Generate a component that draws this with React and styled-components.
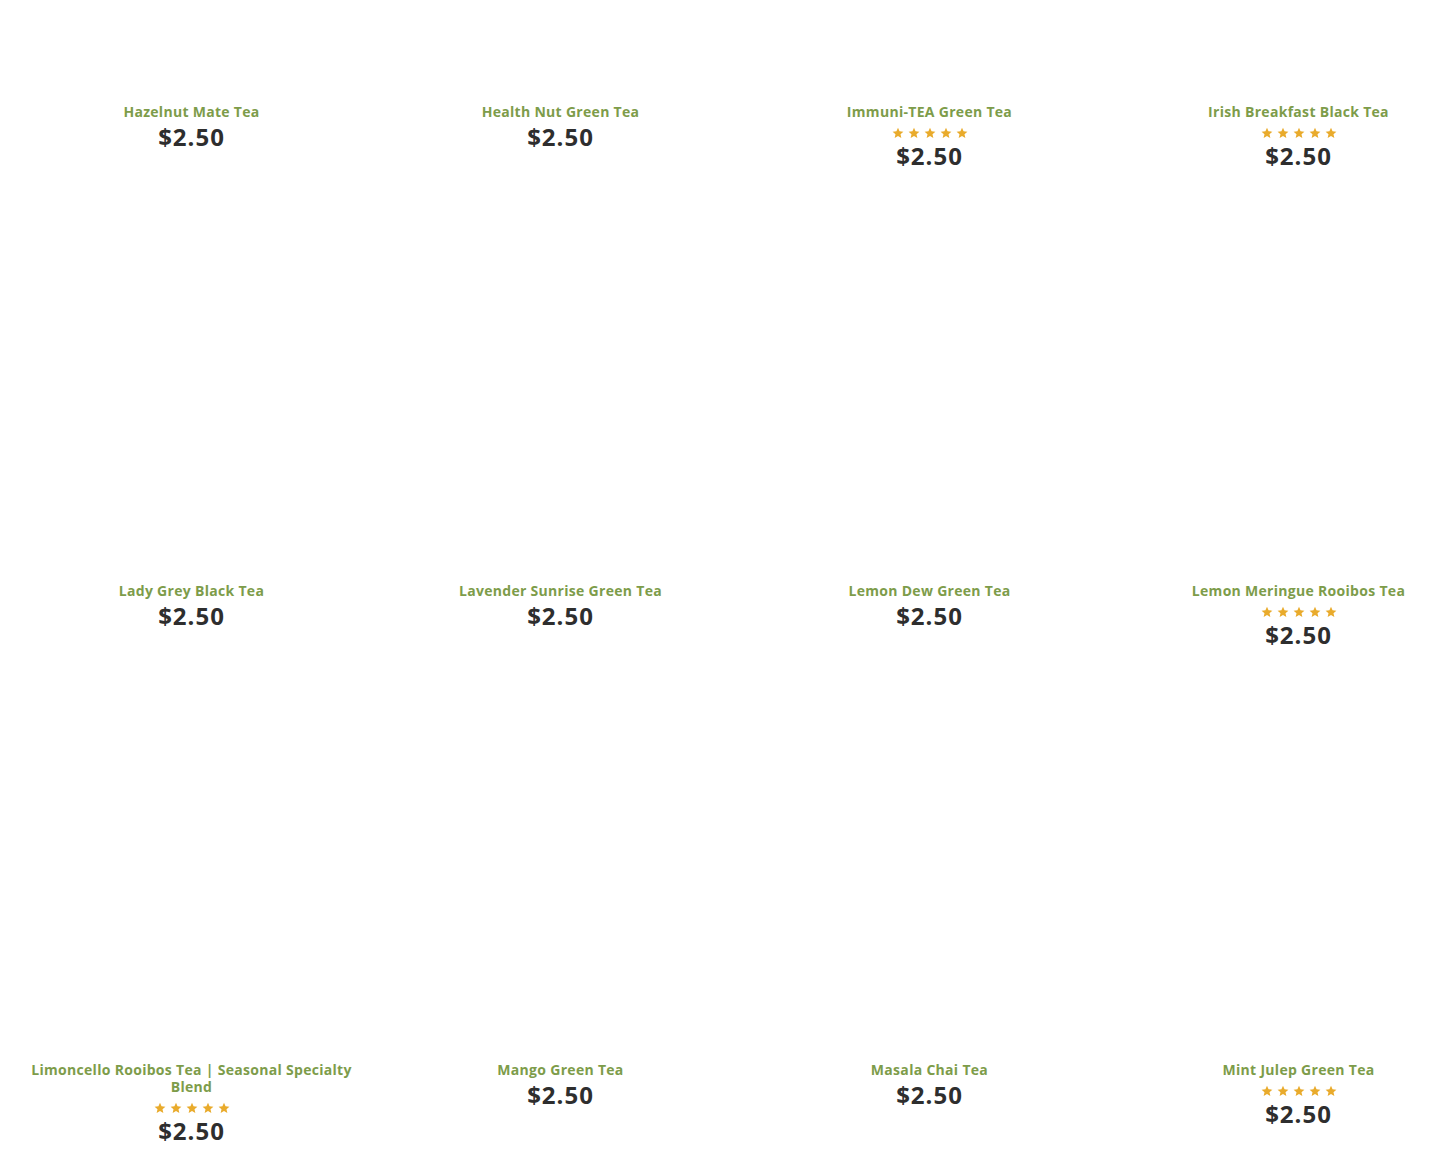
import React from "react";
import styled, { createGlobalStyle } from "styled-components";

const GlobalStyle = createGlobalStyle`
  body {
    margin: 0;
    background: #fff;
    overflow: hidden;
    font-family: "Open Sans", "Liberation Sans", sans-serif;
  }
`;

const products = [
  { name: "Hazelnut Mate Tea", price: "$2.50" },
  { name: "Health Nut Green Tea", price: "$2.50" },
  { name: "Immuni-TEA Green Tea", price: "$2.50", rated: true },
  { name: "Irish Breakfast Black Tea", price: "$2.50", rated: true },
  { name: "Lady Grey Black Tea", price: "$2.50" },
  { name: "Lavender Sunrise Green Tea", price: "$2.50" },
  { name: "Lemon Dew Green Tea", price: "$2.50" },
  { name: "Lemon Meringue Rooibos Tea", price: "$2.50", rated: true },
  { name: "Limoncello Rooibos Tea | Seasonal Specialty Blend", price: "$2.50", rated: true },
  { name: "Mango Green Tea", price: "$2.50" },
  { name: "Masala Chai Tea", price: "$2.50" },
  { name: "Mint Julep Green Tea", price: "$2.50", rated: true },
];

const Page = styled.div`
  width: 1490px;
  padding-left: 7px;
  /* page is scrolled part way down the shop listing */
  margin-top: -290.5px;
`;

const Grid = styled.ul`
  list-style: none;
  margin: 0;
  padding: 0;
  display: grid;
  grid-template-columns: repeat(4, 369px);
  row-gap: 19px;
`;

const Card = styled.li`
  display: flex;
  flex-direction: column;
  align-items: center;
  padding: 0 20px;
  text-align: center;
`;

const Thumb = styled.div`
  width: 100%;
  height: 380px;
  background: #fff;
`;

const Title = styled.h2`
  margin: 13px 0 0;
  font-size: 14px;
  line-height: 17px;
  font-weight: 700;
  letter-spacing: 0.3px;
  color: #7d9c4a;
`;

const Stars = styled.div`
  display: flex;
  gap: 4px;
  margin-top: 7px;
  height: 12px;
  align-items: center;
`;

const Star = styled.svg`
  width: 12px;
  height: 12px;
  fill: #e9ab2c;
`;

const Price = styled.span`
  margin-top: 3px;
  font-size: 24px;
  line-height: 28px;
  font-weight: 700;
  letter-spacing: 1px;
  color: #2e2e2e;
`;

const StarIcon = () => (
  <Star viewBox="0 0 24 24">
    <path d="M12 1.5l3.1 7.1 7.7.7-5.8 5.1 1.7 7.6L12 18l-6.7 4 1.7-7.6-5.8-5.1 7.7-.7z" />
  </Star>
);

export default function App() {
  return (
    <>
      <GlobalStyle />
      <Page>
        <Grid>
          {products.map((p) => (
            <Card key={p.name}>
              <Thumb />
              <Title>{p.name}</Title>
              {p.rated && (
                <Stars>
                  {[0, 1, 2, 3, 4].map((i) => (
                    <StarIcon key={i} />
                  ))}
                </Stars>
              )}
              <Price>{p.price}</Price>
            </Card>
          ))}
        </Grid>
      </Page>
    </>
  );
}
